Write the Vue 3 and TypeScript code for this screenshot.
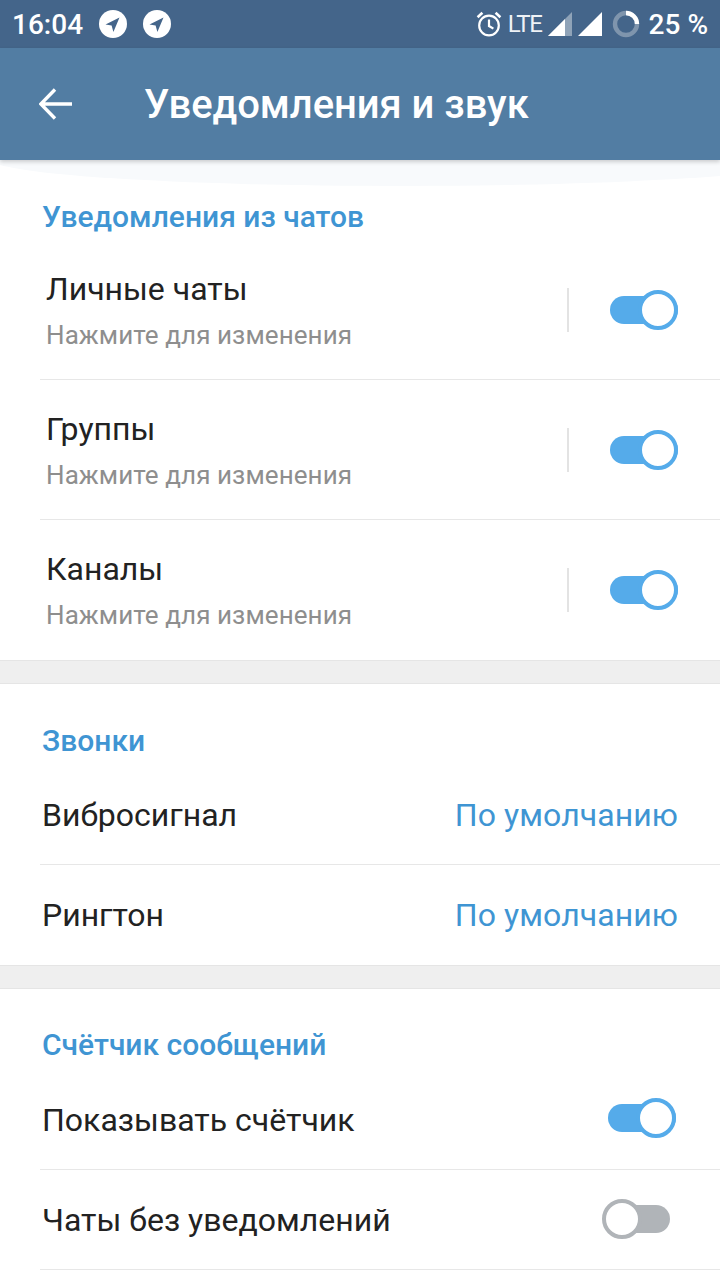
<script setup lang="ts">
interface ToggleRow {
  title: string
  on: boolean
}

const chats: string[] = ['Личные чаты', 'Группы', 'Каналы']
const calls: string[] = ['Вибросигнал', 'Рингтон']
const counter: ToggleRow[] = [
  { title: 'Показывать счётчик', on: true },
  { title: 'Чаты без уведомлений', on: false },
]
</script>

<template>
  <div class="screen">
    <div class="status">
      <span class="time">16:04</span>
      <svg v-for="n in 2" :key="n" class="tg" viewBox="0 0 28 28">
        <circle cx="14" cy="14" r="14" fill="#fff" />
        <path d="M20.5 7.5 6.5 14.6 12.6 15.6 14.4 22Z" fill="#44658a" />
      </svg>
      <span class="spacer"></span>
      <svg class="alarm" viewBox="0 0 26 26" fill="none" stroke="#fff" stroke-width="2.2">
        <circle cx="13" cy="14.5" r="9.8" />
        <path d="M13 8.5V15l4.4 2.6" />
        <path d="M1.6 6.2 6.4 1.8M24.4 6.2 19.6 1.8" stroke-width="2.6" />
      </svg>
      <span class="lte">LTE</span>
      <svg class="sig first" viewBox="0 0 24 24">
        <path d="M24 0V24H0Z" fill="#8fa3b8" />
        <path d="M17 7V24H0Z" fill="#fff" />
      </svg>
      <svg class="sig" viewBox="0 0 24 24"><path d="M24 0V24H0Z" fill="#fff" /></svg>
      <svg class="ring" viewBox="0 0 28 28" fill="none" stroke-width="4.4">
        <circle cx="14" cy="14" r="11" stroke="#7f95ad" />
        <path d="M14 3A11 11 0 0 1 25 14" stroke="#fff" />
      </svg>
      <span class="batt">25 %</span>
    </div>

    <header class="bar">
      <svg class="back" viewBox="0 0 34 32" fill="none" stroke="#fff" stroke-width="3.4">
        <path d="M1.5 16H33M16 1.5 1.8 16 16 30.5" />
      </svg>
      <h1>Уведомления и звук</h1>
    </header>

    <section class="group first-group">
      <div class="curve"></div>
      <h2>Уведомления из чатов</h2>
      <div v-for="(c, i) in chats" :key="c" class="row two" :class="{ last: i === chats.length - 1 }">
        <div class="texts">
          <div class="title">{{ c }}</div>
          <div class="sub">Нажмите для изменения</div>
        </div>
        <span class="vline"></span>
        <span class="switch on"></span>
      </div>
    </section>
    <div class="gap"></div>

    <section class="group">
      <h2>Звонки</h2>
      <div v-for="(c, i) in calls" :key="c" class="row one" :class="{ last: i === calls.length - 1 }">
        <span class="title">{{ c }}</span>
        <span class="value">По умолчанию</span>
      </div>
    </section>
    <div class="gap"></div>

    <section class="group counter">
      <h2>Счётчик сообщений</h2>
      <div v-for="c in counter" :key="c.title" class="row one">
        <span class="title">{{ c.title }}</span>
        <span class="switch" :class="c.on ? 'on near' : 'off'"></span>
      </div>
    </section>
  </div>
</template>

<style>
html,
body {
  margin: 0;
  background: #fff;
}
</style>

<style scoped>
.screen {
  width: 720px;
  height: 1280px;
  overflow: hidden;
  background: #fff;
  font-family: Roboto, "Noto Sans", sans-serif;
  color: #222;
}

.status {
  height: 48px;
  background: #44658a;
  color: #fff;
  display: flex;
  align-items: center;
  padding: 0 12px;
  box-sizing: border-box;
}

.time {
  font-size: 28px;
  font-weight: 500;
  margin-right: 16px;
}

.tg {
  width: 28px;
  height: 28px;
  margin-right: 16px;
}

.spacer {
  flex: 1;
}

.alarm {
  width: 26px;
  height: 26px;
  margin-right: 6px;
}

.lte {
  font-size: 24px;
  letter-spacing: -1.3px;
  margin-right: 6px;
  color: #eef2f6;
}

.sig {
  width: 24px;
  height: 24px;
  margin-right: 6px;
}

.ring {
  width: 28px;
  height: 28px;
  margin: 0 9px 0 4px;
}

.batt {
  font-size: 28px;
  font-weight: 500;
}

.bar {
  height: 112px;
  background: #527da3;
  display: flex;
  align-items: center;
  padding-left: 39px;
  box-shadow: 0 2px 4px rgba(0, 0, 0, 0.18);
  position: relative;
  z-index: 2;
}

.back {
  width: 34px;
  height: 32px;
  margin-right: 71px;
}

h1 {
  margin: 0;
  color: #fff;
  font-size: 40px;
  letter-spacing: -0.06px;
  font-weight: 500;
}

.group {
  position: relative;
  background: #fff;
}

.gap {
  height: 22px;
  background: #efefef;
  border-top: 1px solid #e5e5e5;
  border-bottom: 1px solid #e5e5e5;
}

.curve {
  position: absolute;
  left: -10px;
  width: 820px;
  top: -28px;
  height: 54px;
  border-radius: 50%;
  background: #f8fafc;
}

h2 {
  margin: 0;
  height: 81px;
  padding: 42px 0 0 42px;
  box-sizing: border-box;
  color: #3f95d3;
  font-size: 30px;
  line-height: 30px;
  font-weight: 500;
  position: relative;
}

.first-group h2 {
  height: 80px;
}

.counter h2 {
  padding-top: 41px;
}

.row {
  margin-left: 40px;
  box-sizing: border-box;
  border-bottom: 1px solid #e7e7e7;
  display: flex;
  align-items: center;
}

.row.last {
  border-bottom-color: transparent;
}

.row.two {
  height: 140px;
  padding: 0 42px 0 6px;
}

.row.one {
  height: 100px;
  padding: 0 42px 0 2px;
}

.texts {
  flex: 1;
  padding-top: 2px;
}

.title {
  font-size: 32px;
  line-height: 36px;
  color: #222;
}

.sub {
  font-size: 26px;
  line-height: 30px;
  letter-spacing: 0.08px;
  margin-top: 13px;
  color: #8e8e8e;
}

.value {
  margin-left: auto;
  font-size: 32px;
  letter-spacing: 0.08px;
  color: #3f95d3;
}

.vline {
  width: 2px;
  height: 44px;
  background: #e3e3e3;
  margin-right: 41px;
}

.switch {
  position: relative;
  display: block;
  width: 68px;
  height: 28px;
  border-radius: 14px;
  margin-left: auto;
}

.switch::after {
  content: "";
  position: absolute;
  top: -6px;
  width: 40px;
  height: 40px;
  box-sizing: border-box;
  border-radius: 50%;
  background: #fff;
}

.vline + .switch {
  margin-left: 0;
}

.switch.on {
  background: #55abea;
}

.switch.on::after {
  right: 0;
  border: 4px solid #55abea;
}

.switch.off {
  width: 60px;
  margin: 0 8px 2px auto;
  background: #b0b4b8;
}

.switch.off::after {
  left: -8px;
  border: 4px solid #b0b4b8;
}

.switch.near {
  margin: 0 2px 3px auto;
}
</style>
